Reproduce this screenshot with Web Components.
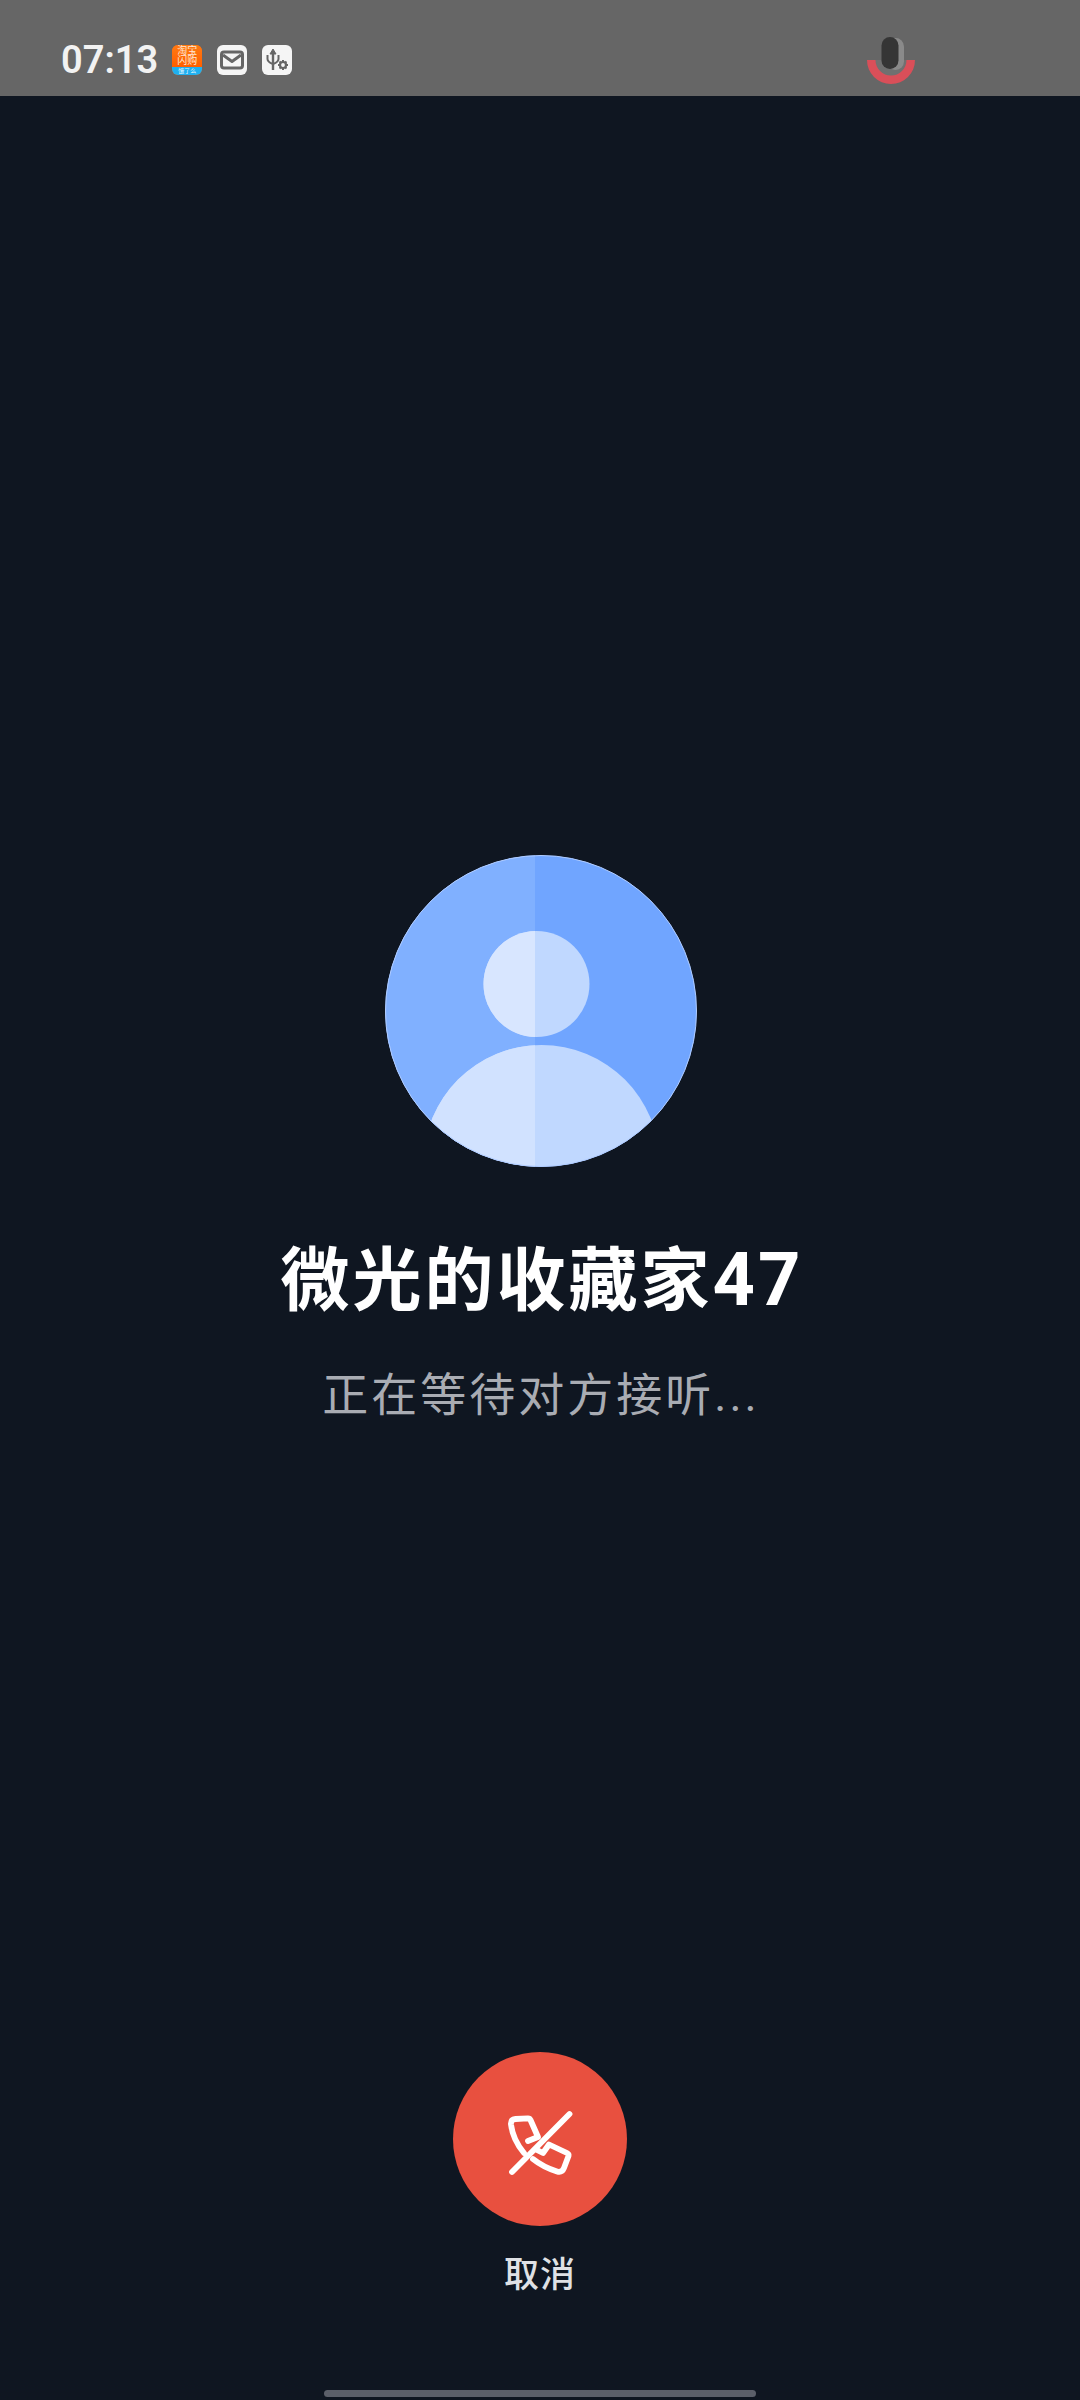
<!DOCTYPE html>
<html lang="zh">
<head>
<meta charset="utf-8">
<title>通话</title>
<style>
  html, body { margin: 0; padding: 0; background: #0f1621; }
  .num { font-size: 74px; }
</style>
</head>
<body>
<call-screen>
  <status-bar slot="status" time="07:13"></status-bar>
  <caller-avatar slot="avatar"></caller-avatar>
  <span slot="name">微光的收藏家<span class="num">47</span></span>
  <span slot="state">正在等待对方接听...</span>
  <cancel-button slot="action">取消</cancel-button>
</call-screen>

<script>
const FONT = `Roboto, "Noto Sans CJK SC", sans-serif`;

class CallScreen extends HTMLElement {
  constructor() {
    super();
    this.attachShadow({ mode: 'open' });
    this.shadowRoot.innerHTML = `
      <style>
        :host {
          display: flex;
          flex-direction: column;
          width: 1080px;
          height: 2400px;
          background: #0f1621;
          font-family: ${FONT};
          overflow: hidden;
        }
        main {
          flex: 1;
          display: flex;
          flex-direction: column;
          align-items: center;
          padding-top: 759px;
        }
        .name {
          margin-top: 68px;
          padding-left: 4px;
          font-size: 69px;
          line-height: 90px;
          font-weight: 700;
          color: #ffffff;
          letter-spacing: 3px;
        }
        .state {
          margin-top: 38px;
          font-size: 46px;
          line-height: 60px;
          color: #a9acb3;
          letter-spacing: 3px;
          padding-left: 2px;
        }
        .action {
          margin-top: auto;
        }
        .home {
          align-self: center;
          width: 432px;
          height: 7px;
          margin-bottom: 3px;
          border-radius: 4px;
          background: #5b5f69;
        }
      </style>
      <slot name="status"></slot>
      <main>
        <slot name="avatar"></slot>
        <div class="name"><slot name="name"></slot></div>
        <div class="state"><slot name="state"></slot></div>
        <div class="action"><slot name="action"></slot></div>
      </main>
      <div class="home"></div>
    `;
  }
}

class StatusBar extends HTMLElement {
  constructor() {
    super();
    this.attachShadow({ mode: 'open' });
    this.shadowRoot.innerHTML = `
      <style>
        :host {
          display: flex;
          align-items: center;
          height: 96px;
          box-sizing: border-box;
          padding: 24px 164px 0 61px;
          background: #666666;
          color: #f2f2f2;
        }
        .time {
          font-size: 38px;
          font-weight: 600;
          line-height: 44px;
          margin-right: 14px;
        }
        .icons {
          display: flex;
          gap: 15px;
        }
        .tile {
          width: 30px;
          height: 30px;
          border-radius: 6px;
          background: #f5f5f5;
          overflow: hidden;
        }
        .tile svg { display: block; }
        .taobao {
          display: flex;
          flex-direction: column;
          background: #ff6a0a;
          color: #ffe9d8;
          text-align: center;
        }
        .taobao .top {
          height: 22px;
          font-size: 10px;
          line-height: 10px;
          padding-top: 1px;
          box-sizing: border-box;
          background: linear-gradient(#ff7a12, #ff5f00);
        }
        .taobao .bottom {
          flex: 1;
          font-size: 6px;
          line-height: 8px;
          background: #1fb0f0;
          color: #e8f7ff;
        }
        .mic { margin-left: auto; display: block; }
      </style>
      <span class="time"></span>
      <div class="icons">
        <div class="tile taobao">
          <div class="top">淘宝<br>闪购</div>
          <div class="bottom">饿了么</div>
        </div>
        <div class="tile">
          <svg width="30" height="30" viewBox="0 0 30 30" fill="none" stroke="#666" stroke-width="3" stroke-linejoin="round">
            <rect x="4.5" y="7" width="21" height="16" rx="2.5"/>
            <path d="M6 10 L15 16.5 L24 10"/>
          </svg>
        </div>
        <div class="tile">
          <svg width="30" height="30" viewBox="0 0 30 30" fill="none" stroke="#666" stroke-width="2">
            <path d="M11 6 V25" stroke-width="2.4"/>
            <path d="M8 9 L11 4 L14 9 Z" fill="#666" stroke-width="1"/>
            <path d="M5.5 10 V14 Q5.5 17 11 19 Q16.5 17 16.5 14 V10"/>
            <circle cx="21" cy="20" r="3" stroke-width="2.2"/>
            <path d="M21 15 V17 M21 23 V25 M16 20 H18 M24 20 H26 M17.5 16.5 L18.9 17.9 M23.1 22.1 L24.5 23.5 M24.5 16.5 L23.1 17.9 M18.9 22.1 L17.5 23.5" stroke-width="2"/>
          </svg>
        </div>
      </div>
      <svg class="mic" width="50" height="50" viewBox="0 0 50 50">
        <path d="M1 25 A24 24 0 0 0 49 25 Z" fill="#d94f59"/>
        <path d="M9.5 25 A15.5 15.5 0 0 0 40.5 25 Z" fill="#707070"/>
        <rect x="21" y="3" width="17" height="32" rx="8.5" fill="#8a8a8a"/>
        <rect x="15.5" y="2" width="17" height="32" rx="8.5" fill="#353535"/>
      </svg>
    `;
    this.shadowRoot.querySelector('.time').textContent = this.getAttribute('time');
  }
}

class CallerAvatar extends HTMLElement {
  constructor() {
    super();
    this.attachShadow({ mode: 'open' });
    this.shadowRoot.innerHTML = `
      <style>
        :host {
          display: block;
          width: 312px;
          height: 312px;
          margin-left: 2px;
        }
        svg { display: block; }
      </style>
      <svg width="312" height="312" viewBox="0 0 312 312">
        <defs>
          <clipPath id="disc"><circle cx="156" cy="156" r="155.7"/></clipPath>
          <clipPath id="left"><rect x="0" y="0" width="150" height="312"/></clipPath>
        </defs>
        <g clip-path="url(#disc)">
          <rect width="312" height="312" fill="#70a5ff"/>
          <rect x="0" y="0" width="150" height="312" fill="#80b0ff"/>
          <circle cx="151.5" cy="129" r="53" fill="#c0d8ff"/>
          <circle cx="156.5" cy="308" r="118" fill="#c0d8ff"/>
          <g clip-path="url(#left)">
            <circle cx="151.5" cy="129" r="53" fill="#d8e6ff"/>
            <circle cx="156.5" cy="308" r="118" fill="#d1e2ff"/>
          </g>
        </g>
        <circle cx="156" cy="156" r="155.5" fill="none" stroke="#b0ccff" stroke-width="1"/>
      </svg>
    `;
  }
}

class CancelButton extends HTMLElement {
  constructor() {
    super();
    this.attachShadow({ mode: 'open' });
    this.shadowRoot.innerHTML = `
      <style>
        :host {
          display: flex;
          flex-direction: column;
          align-items: center;
          margin-bottom: 90px;
          color: #dfe1e5;
          font-size: 35px;
          font-weight: 500;
          letter-spacing: 1px;
          line-height: 48px;
        }
        .round {
          display: flex;
          align-items: center;
          justify-content: center;
          width: 174px;
          height: 174px;
          border-radius: 50%;
          background: #e8503f;
          margin-bottom: 26px;
        }
        svg { display: block; }
      </style>
      <div class="round">
        <svg width="80" height="80" viewBox="0 0 80 80" fill="none" stroke="#fff" stroke-width="5.8" stroke-linecap="round" stroke-linejoin="round">
          <path d="M69.5 15 L12 73"/>
          <path d="M28 42 L38 38 L30.5 21 Q29.8 19.3 28 19.3 L15.5 20 Q10.5 20.5 11 25.5 Q13 41 24 54"/>
          <path d="M33 60 Q43 68 57 72.5 Q62 74 64 69 L68.5 57 Q69 55 67 54 L49 45.5 L43 54 L37 51"/>
        </svg>
      </div>
      <slot></slot>
    `;
  }
}

customElements.define('call-screen', CallScreen);
customElements.define('status-bar', StatusBar);
customElements.define('caller-avatar', CallerAvatar);
customElements.define('cancel-button', CancelButton);
</script>
</body>
</html>
